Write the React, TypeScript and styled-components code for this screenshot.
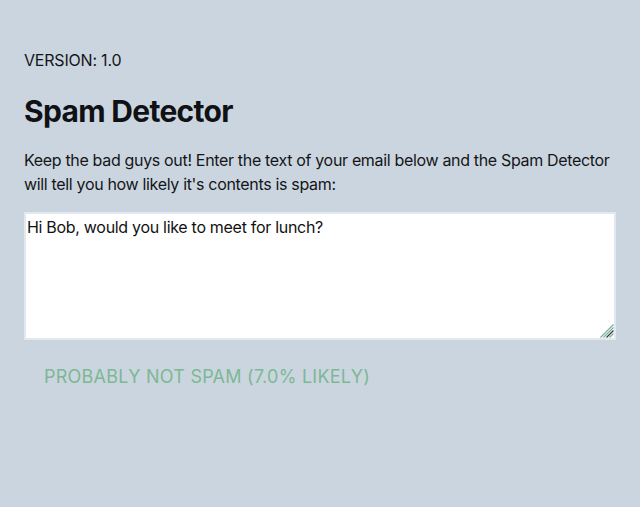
import React, { useState } from "react";
import styled, { createGlobalStyle } from "styled-components";

const Global = createGlobalStyle`
  html, body { margin: 0; padding: 0; background: #cbd5e0; }
  body { font-family: Inter, "Noto Sans", sans-serif; color: #141518; }
`;

const Page = styled.div`
  padding: 48px 24px 24px 24px;
  display: flex;
  flex-direction: column;
`;

const Version = styled.div`
  font-size: 16px;
  line-height: 24px;
  letter-spacing: -0.2px;
`;

const Title = styled.h1`
  margin: 21px 0 0 0;
  font-size: 30px;
  line-height: 36px;
  font-weight: 700;
  letter-spacing: -0.7px;
  color: #101114;
`;

const Intro = styled.p`
  margin: 19px 0 0 0;
  font-size: 16px;
  line-height: 24px;
  letter-spacing: -0.33px;
`;

const Field = styled.div`
  position: relative;
  margin-top: 16px;
  width: 592px;
`;

const Area = styled.textarea`
  display: block;
  box-sizing: border-box;
  width: 100%;
  height: 128px;
  margin: 0;
  padding: 3px 1px 2px 1px;
  border: 2px solid #e2e8f0;
  background: #fff;
  font-family: Inter, "Noto Sans", sans-serif;
  font-size: 16px;
  line-height: 20px;
  letter-spacing: -0.3px;
  color: #111214;
  resize: none;
  outline: none;
`;

const Grip = styled.svg`
  position: absolute;
  right: 2px;
  bottom: 2px;
  width: 14px;
  height: 14px;
  pointer-events: none;
`;

const Result = styled.div`
  margin-top: 23px;
  padding-left: 20px;
  font-size: 18px;
  line-height: 28px;
  color: #7db893;
  letter-spacing: 0.25px;
`;

export default function App() {
  const [text, setText] = useState("Hi Bob, would you like to meet for lunch?");
  return (
    <>
      <Global />
      <Page>
        <Version>VERSION: 1.0</Version>
        <Title>Spam Detector</Title>
        <Intro>
          Keep the bad guys out! Enter the text of your email below and the Spam Detector
          will tell you how likely it's contents is spam:
        </Intro>
        <Field>
          <Area value={text} onChange={(e) => setText(e.target.value)} spellCheck={false} />
          <Grip viewBox="0 0 14 14">
            <line x1="0.5" y1="13.5" x2="13.5" y2="0.5" stroke="#7fae95" strokeWidth="1.2" />
            <line x1="3.5" y1="13.5" x2="13.5" y2="3.5" stroke="#7fae95" strokeWidth="1.2" />
            <line x1="6.5" y1="13.5" x2="13.5" y2="6.5" stroke="#2d3748" strokeWidth="1.2" />
            <line x1="9.5" y1="13.5" x2="13.5" y2="9.5" stroke="#7fae95" strokeWidth="1.2" />
          </Grip>
        </Field>
        <Result>PROBABLY NOT SPAM (7.0% LIKELY)</Result>
      </Page>
    </>
  );
}
